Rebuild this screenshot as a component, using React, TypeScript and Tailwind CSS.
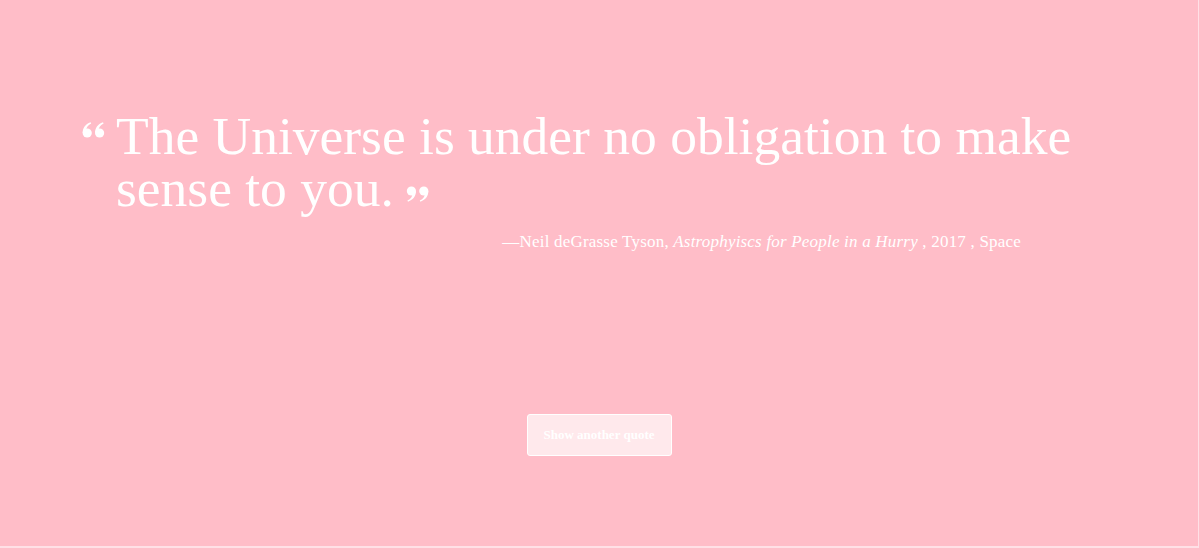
import React from "react";

const QuoteMark = ({ className = "" }: { className?: string }) => (
  <svg viewBox="0 0 24 16" className={className} fill="currentColor">
    <circle cx="5.2" cy="11" r="4.6" />
    <path d="M0.7 11 C0.6 6 3.2 2.4 8.6 0.3 L9.2 1.4 C5.6 3.2 4.1 5.6 4.3 8.6 Z" />
    <circle cx="17.6" cy="11" r="4.6" />
    <path d="M13.1 11 C13 6 15.6 2.4 21 0.3 L21.6 1.4 C18 3.2 16.5 5.6 16.7 8.6 Z" />
  </svg>
);

const App = () => {
  return (
    <div className="bg-[#ffe0e6] min-h-[548px] w-full">
      <div
        className="h-[546px] w-[1198px] bg-[#ffbdc8] flex flex-col items-center text-white"
        style={{ fontFamily: '"Liberation Serif", "DejaVu Serif", serif' }}
      >
        <div className="w-full pt-[110px] pl-[82px] pr-[60px]">
          <div className="flex items-start gap-[10px]">
            <QuoteMark className="w-[24px] h-[16px] mt-[12px] shrink-0" />
            <h1 className="text-[53.5px] leading-[52px] font-normal w-[990px]">
              The Universe is under no obligation to make sense to you.
              <QuoteMark className="inline-block w-[24px] h-[16px] ml-[11px] align-[4px] rotate-180" />
            </h1>
          </div>
          <p className="text-right w-[857px] ml-[82px] mt-[15px] text-[17px] tracking-[0.2px]">
            —Neil deGrasse Tyson, <em>Astrophyiscs for People in a Hurry</em> , 2017 , Space
          </p>
        </div>
        <button className="mt-[159px] w-[145px] h-[42px] rounded-[3px] border border-white bg-[#ffe9ec] text-white text-[13px] font-bold">
          Show another quote
        </button>
      </div>
    </div>
  );
};

export default App;
